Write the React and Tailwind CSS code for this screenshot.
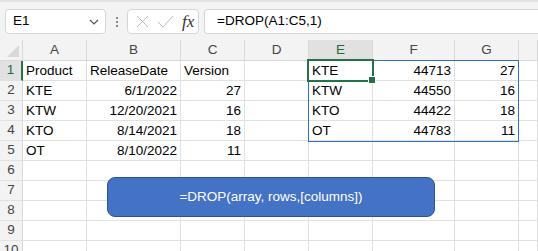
const COLS = ['A', 'B', 'C', 'D', 'E', 'F', 'G', ''];

const DATA = {
  1: { A: 'Product', B: 'ReleaseDate', C: 'Version', E: 'KTE', F: '44713', G: '27' },
  2: { A: 'KTE', B: '6/1/2022', C: '27', E: 'KTW', F: '44550', G: '16' },
  3: { A: 'KTW', B: '12/20/2021', C: '16', E: 'KTO', F: '44422', G: '18' },
  4: { A: 'KTO', B: '8/14/2021', C: '18', E: 'OT', F: '44783', G: '11' },
  5: { A: 'OT', B: '8/10/2022', C: '11' },
};

function isNumberLike(value) {
  return /^[\d/]+$/.test(value || '');
}

function FormulaBar() {
  return (
    <div className="flex h-[40px] items-start border-t-2 border-[#e3e3e3] bg-[#f3f3f3] pt-[7px]">
      <div className="ml-[5px] flex h-[25px] w-[101px] items-center justify-between rounded-[4px] border border-[#d6d6d6] bg-white pl-[7px] pr-[6px] text-[13.5px] text-black">
        <span>E1</span>
        <svg width="10" height="6" viewBox="0 0 10 6" fill="none">
          <path d="M1 1l4 4 4-4" stroke="#555" strokeWidth="1.2" />
        </svg>
      </div>
      <div className="ml-[10px] flex h-[25px] flex-col items-center justify-center gap-[2px]">
        <span className="h-[2px] w-[2px] bg-[#8a8a8a]" />
        <span className="h-[2px] w-[2px] bg-[#8a8a8a]" />
        <span className="h-[2px] w-[2px] bg-[#8a8a8a]" />
      </div>
      <div className="ml-[9px] flex h-[25px] w-[72px] items-center rounded-[4px] border border-[#d6d6d6] bg-white pl-[8px]">
        <svg width="13" height="13" viewBox="0 0 13 13" fill="none">
          <path d="M1 1l11 11M12 1L1 12" stroke="#bdbdbd" strokeWidth="1" />
        </svg>
        <svg className="ml-[8px]" width="17" height="13" viewBox="0 0 17 13" fill="none">
          <path d="M1 7l5 5 10-11" stroke="#bdbdbd" strokeWidth="1" />
        </svg>
        <span className="ml-[8px] font-['Liberation_Serif',serif] text-[17px] italic leading-none text-[#333]">fx</span>
      </div>
      <div className="ml-[5px] flex h-[25px] flex-1 items-center rounded-l-[4px] border border-r-0 border-[#d6d6d6] bg-white pl-[12px] text-[13.5px] text-black">
        =DROP(A1:C5,1)
      </div>
    </div>
  );
}

function HeaderRow() {
  return (
    <>
      <div className="relative border-b border-r border-[#d8d8d8] bg-[#f3f3f3]">
        <svg className="absolute bottom-[3px] right-[3px]" width="12" height="12" viewBox="0 0 12 12">
          <path d="M12 0V12H0Z" fill="#d9d9d9" />
        </svg>
      </div>
      {COLS.map((col, i) => (
        <div
          key={i}
          className={`flex items-center justify-center border-b border-r border-[#d8d8d8] text-[13.5px] ${
            col === 'E' ? 'bg-[#e1e1e1] text-[#1e6b41]' : 'bg-[#f3f3f3] text-[#444]'
          }`}
        >
          {col}
        </div>
      ))}
    </>
  );
}

function SheetRow({ row }) {
  const values = DATA[row] || {};
  return (
    <>
      <div
        className={`flex items-center justify-center border-b border-[#e1e1e1] text-[13.5px] ${
          row === 1 ? 'border-r-2 border-r-[#217346] bg-[#e1e1e1] text-[#1e6b41]' : 'border-r border-r-[#d8d8d8] bg-[#f3f3f3] text-[#444]'
        }`}
      >
        {row}
      </div>
      {COLS.map((col, i) => {
        const value = values[col] || '';
        const right = row > 1 || col === 'F' || col === 'G' ? isNumberLike(value) : false;
        return (
          <div
            key={i}
            className={`flex items-center overflow-hidden whitespace-nowrap border-b border-r border-[#e1e1e1] bg-white px-[3px] pt-[1px] text-[13.5px] text-black ${
              right ? 'justify-end' : 'justify-start'
            }`}
          >
            {value}
          </div>
        );
      })}
    </>
  );
}

export default function App() {
  const rows = [1, 2, 3, 4, 5, 6, 7, 8, 9, 10];
  return (
    <div className="relative h-[251px] w-[538px] overflow-hidden bg-white font-['Liberation_Sans',Arial,sans-serif]">
      <FormulaBar />
      <div className="relative">
        <div className="grid grid-cols-[23px_64px_94px_64px_64px_64px_82px_64px_1fr] grid-rows-[21px_repeat(10,20px)]">
          <HeaderRow />
          {rows.map((row) => (
            <SheetRow key={row} row={row} />
          ))}
        </div>

        <div className="pointer-events-none absolute left-[308px] top-[20px] h-[82px] w-[211px] border border-[#2f6fc9]" />

        <div className="pointer-events-none absolute left-[307px] top-[19px] h-[23px] w-[67px] border-2 border-[#217346]">
          <span className="absolute -bottom-[4px] -right-[4px] box-content h-[6px] w-[6px] border border-white bg-[#217346]" />
        </div>

        <div className="absolute left-[107px] top-[137px] flex h-[40px] w-[328px] items-center justify-center rounded-[8px] border border-[#2f528f] bg-[#4472c4] text-[13.5px] text-white">
          =DROP(array, rows,[columns])
        </div>
      </div>
    </div>
  );
}
